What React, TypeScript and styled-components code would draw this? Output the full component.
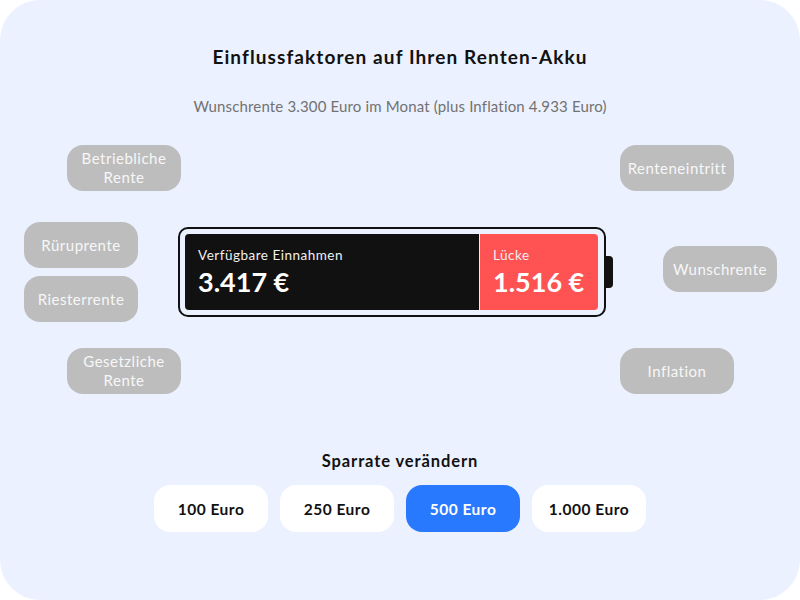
import React from "react";
import styled, { createGlobalStyle } from "styled-components";

const Global = createGlobalStyle`
  html, body { margin: 0; padding: 0; background: #ffffff; }
  body { font-family: "Lato", "Noto Sans", sans-serif; }
  * { box-sizing: border-box; }
`;

const Card = styled.div`
  width: 800px;
  height: 600px;
  border-radius: 40px;
  background: #ebf1fe;
  display: flex;
  flex-direction: column;
  align-items: center;
  padding-top: 44px;
`;

const Title = styled.h1`
  margin: 0;
  font-size: 19px;
  line-height: 26px;
  font-weight: 700;
  color: #111;
  letter-spacing: 1.1px;
`;

const Subtitle = styled.p`
  margin: 26px 0 0;
  font-size: 15px;
  line-height: 20px;
  font-weight: 400;
  color: #727272;
  letter-spacing: 0.15px;
`;

const Middle = styled.div`
  width: 100%;
  margin-top: 29px;
  padding: 0 23px 0 24px;
  display: flex;
  align-items: center;
`;

const SideColumn = styled.div<{ $width: number }>`
  width: ${(p) => p.$width}px;
  flex: none;
  display: flex;
  flex-direction: column;
`;

const Pill = styled.div<{ $offset: number; $top: number }>`
  width: 114px;
  height: 46px;
  margin-left: ${(p) => p.$offset}px;
  margin-top: ${(p) => p.$top}px;
  border-radius: 16px;
  background: #bdbdbd;
  color: #f7f7f7;
  font-size: 15px;
  line-height: 19px;
  font-weight: 400;
  letter-spacing: 0.5px;
  text-align: center;
  display: flex;
  align-items: center;
  justify-content: center;
  flex: none;
`;

const BatteryWrap = styled.div`
  display: flex;
  align-items: center;
  flex: none;
  margin-top: 5px;
`;

const BatteryBody = styled.div`
  width: 428px;
  height: 90px;
  border: 2px solid #111;
  border-radius: 10px;
  padding: 5px 6px 5px 5px;
  display: flex;
  gap: 1px;
  background: #ebf1fe;
`;

const Terminal = styled.div`
  width: 8px;
  height: 32px;
  margin-left: -1px;
  background: #111;
  border-radius: 0 4px 4px 0;
`;

const Segment = styled.div<{ $color: string; $width: number; $radius: string }>`
  width: ${(p) => p.$width}px;
  flex: none;
  background: ${(p) => p.$color};
  border-radius: ${(p) => p.$radius};
  color: #fff;
  padding: 13px 0 0 13px;
  display: flex;
  flex-direction: column;
`;

const SegLabel = styled.span`
  font-size: 13.5px;
  line-height: 16px;
  font-weight: 400;
  color: #f0f0f0;
  letter-spacing: 0.5px;
`;

const SegValue = styled.span`
  margin-top: 4px;
  font-size: 27px;
  line-height: 30px;
  font-weight: 700;
  color: #fff;
`;

const RateTitle = styled.h2`
  margin: 56px 0 0;
  font-size: 16.5px;
  line-height: 22px;
  font-weight: 700;
  color: #111;
  letter-spacing: 0.9px;
`;

const RateRow = styled.div`
  margin-top: 13px;
  display: flex;
  gap: 12px;
`;

const RateButton = styled.button<{ $active?: boolean }>`
  width: 114px;
  height: 47px;
  border: none;
  border-radius: 16px;
  background: ${(p) => (p.$active ? "#2979ff" : "#ffffff")};
  color: ${(p) => (p.$active ? "#ffffff" : "#111111")};
  font-family: "Lato", "Noto Sans", sans-serif;
  font-size: 15.5px;
  font-weight: 700;
  letter-spacing: 0.5px;
  cursor: pointer;
`;

export default function App() {
  const rates = ["100 Euro", "250 Euro", "500 Euro", "1.000 Euro"];
  return (
    <>
      <Global />
      <Card>
        <Title>Einflussfaktoren auf Ihren Renten-Akku</Title>
        <Subtitle>Wunschrente 3.300 Euro im Monat (plus Inflation 4.933 Euro)</Subtitle>
        <Middle>
          <SideColumn $width={154}>
            <Pill $offset={43} $top={0}>
              Betriebliche
              <br />
              Rente
            </Pill>
            <Pill $offset={0} $top={31}>Rüruprente</Pill>
            <Pill $offset={0} $top={8}>Riesterrente</Pill>
            <Pill $offset={43} $top={26}>
              Gesetzliche
              <br />
              Rente
            </Pill>
          </SideColumn>
          <BatteryWrap>
            <BatteryBody>
              <Segment $color="#111111" $width={294} $radius="4px 0 0 4px">
                <SegLabel>Verfügbare Einnahmen</SegLabel>
                <SegValue>3.417 €</SegValue>
              </Segment>
              <Segment $color="#ff5252" $width={118} $radius="0 4px 4px 0">
                <SegLabel>Lücke</SegLabel>
                <SegValue>1.516 €</SegValue>
              </Segment>
            </BatteryBody>
            <Terminal />
          </BatteryWrap>
          <SideColumn $width={166}>
            <Pill $offset={7} $top={0}>Renteneintritt</Pill>
            <Pill $offset={50} $top={55}>Wunschrente</Pill>
            <Pill $offset={7} $top={56}>Inflation</Pill>
          </SideColumn>
        </Middle>
        <RateTitle>Sparrate verändern</RateTitle>
        <RateRow>
          {rates.map((r) => (
            <RateButton key={r} $active={r === "500 Euro"}>
              {r}
            </RateButton>
          ))}
        </RateRow>
      </Card>
    </>
  );
}
